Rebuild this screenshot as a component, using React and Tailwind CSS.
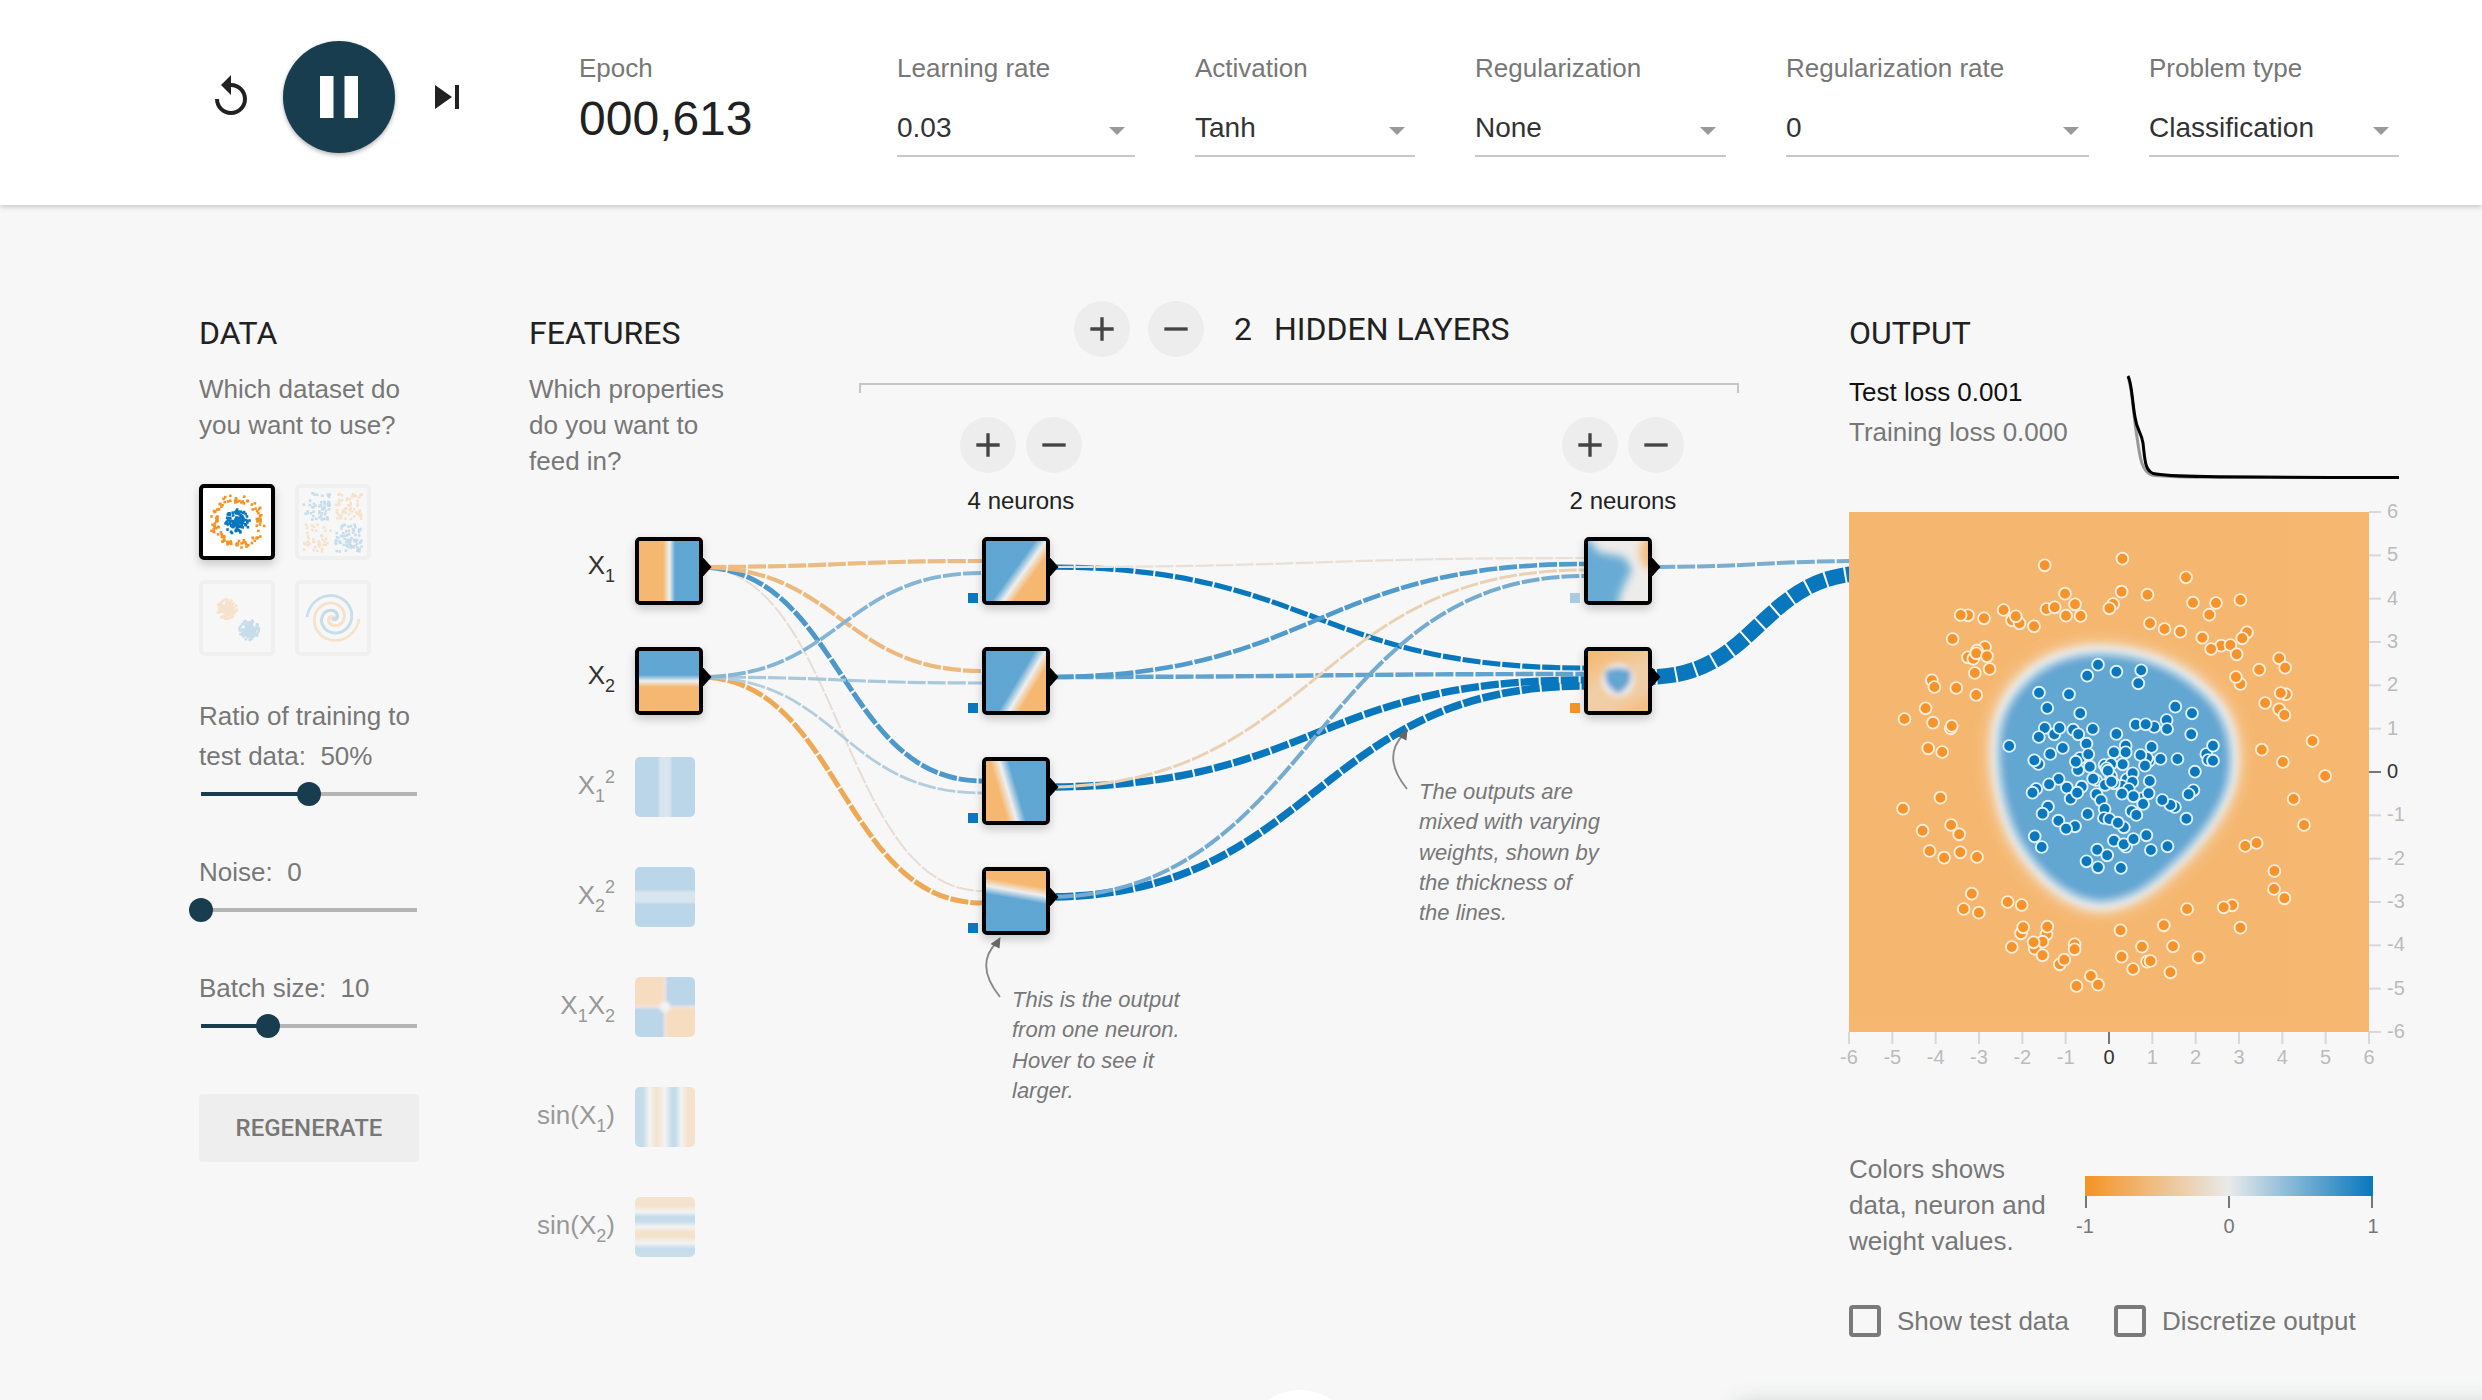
import { useState } from "react";

const ORANGE = "#f59322";
const LIGHT = "#e8eaeb";
const BLUE = "#0877bd";

const HYPERPARAMS = [
  { label: "Learning rate", value: "0.03", width: "w-[238px]" },
  { label: "Activation", value: "Tanh", width: "w-[220px]" },
  { label: "Regularization", value: "None", width: "w-[251px]" },
  { label: "Regularization rate", value: "0", width: "w-[303px]" },
  { label: "Problem type", value: "Classification", width: "w-[250px]" },
];

// Samples of the circle dataset, in heatmap pixels (520 x 520)
const OUTER_POINTS = [
  [195.7, 53.3], [273.4, 46.7], [337, 65.3], [216, 81.7], [272.6, 79.7], [298.5, 82.7],
  [344, 90.7], [367, 91], [391.4, 88], [154.6, 98], [197.5, 97], [205.7, 95.3],
  [226, 92.3], [264.1, 92], [260.4, 96.3], [360.3, 102.7], [119, 103.3], [111.7, 103],
  [135, 106.3], [163, 108.3], [170.5, 111.3], [166.8, 104.3], [185, 114.3], [217, 103.7],
  [231.6, 104], [301, 111.3], [315.5, 117], [331.4, 119.7], [398, 120.3], [353.3, 125.7],
  [393.2, 126.3], [103.6, 127], [136, 135], [128, 138.7], [119, 145.3], [124.3, 146.7],
  [127.3, 141.3], [138, 144.3], [372.1, 133.7], [362.1, 137], [381.4, 133], [387.7, 142.3],
  [430.2, 146.3], [140.6, 157], [125.8, 161], [410.2, 157.7], [436.1, 155.7], [82.9, 168.3],
  [85.4, 175], [107.3, 176], [391.4, 172], [386.9, 165], [436.9, 182.3], [431.7, 181],
  [127.2, 183], [76.6, 196.3], [416.1, 191], [430.2, 197.3], [435.4, 203], [55.5, 207],
  [84, 210.7], [101.7, 216.3], [102.8, 214], [79.2, 236.3], [93.2, 240], [412.8, 237.7],
  [463.5, 229], [433.9, 250], [476.1, 264], [91.4, 285.7], [54, 296.7], [102.1, 313],
  [73.6, 318.7], [110.2, 322.3], [80.6, 339], [95.1, 345.7], [111.3, 340.3], [128, 345],
  [444.6, 287], [455, 313], [407.6, 331], [396.2, 334], [425.4, 359], [425, 377],
  [435.4, 386.3], [122.8, 381.7], [114.7, 397], [129.8, 400.7], [158.7, 390], [172.7, 393],
  [338.1, 397], [383.2, 393.3], [374.7, 395.3], [391.4, 415.7], [314.8, 413.3], [271.5, 418.3],
  [172, 421.3], [174.2, 415.3], [197.5, 422.3], [198.3, 414.7], [193.5, 429.7], [185.7, 436.7],
  [184.6, 430.3], [162.8, 435], [193.5, 443.3], [225.6, 432.3], [225.6, 437.3], [210.8, 452.3],
  [215.3, 447.7], [293, 434.7], [324, 434.3], [349.6, 445.3], [272.6, 444.7], [298.1, 449.7],
  [301.5, 449], [284.1, 457], [321.4, 460.3], [241.9, 464], [227.5, 474], [249, 472.7],
];

const INNER_POINTS = [
  [249, 152.7], [238.2, 163.7], [267.4, 159.7], [292.2, 158.3], [289.3, 171.3], [190, 180.7],
  [220, 182.3], [198.3, 196], [231.2, 201.3], [326.3, 194.7], [343, 201.3], [195.7, 216],
  [205.3, 222.3], [210.5, 216], [224.2, 217.7], [229.3, 222.3], [243.8, 217], [189.8, 225],
  [160.2, 234], [267.4, 222], [286.7, 212.7], [305.2, 215], [296.7, 212.3], [317.7, 208],
  [318.1, 217], [342.2, 222.3], [357.3, 242], [359.2, 248], [364, 233.7], [364, 248.7],
  [237.5, 231.7], [213.8, 236], [201.2, 242], [276.7, 233.7], [302.6, 235], [264.9, 240.3],
  [276.7, 240.3], [229, 258], [231, 246], [239.3, 242.3], [226.8, 249.7], [189.4, 252],
  [185.3, 248.3], [300, 249], [298, 246], [291.5, 243], [311.5, 247], [328.5, 247],
  [240.8, 254.7], [273.7, 252.3], [296, 253.7], [255.6, 253], [262, 252], [257.5, 256.3],
  [262, 264], [258.9, 258.7], [345.9, 259.7], [209.7, 267], [247, 268], [244.1, 266.7],
  [200.1, 272.3], [277.8, 267.3], [283.7, 261.3], [273, 274], [283.4, 270], [300.7, 269],
  [256, 273], [264.9, 271.3], [262.3, 269.7], [187.2, 277], [183.5, 280.7], [217.9, 275.7],
  [232.7, 274.7], [344.4, 278.3], [339.6, 282.3], [221.6, 286.7], [228.2, 280.7], [247.5, 282.3],
  [251.9, 288.3], [279.7, 277], [273, 281.7], [293.3, 286.3], [284.5, 284.3], [299.6, 281.3],
  [294.1, 292], [325.9, 295], [321.4, 293], [313.3, 288], [199, 294.7], [193.5, 301.7],
  [255.6, 297], [238.6, 302], [254.9, 306], [260.4, 307], [209.4, 308.7], [226, 314.3],
  [217.1, 316.7], [274.8, 315.3], [268.9, 310.7], [282.6, 299.3], [287.4, 303], [337.4, 306.7],
  [185.7, 324.3], [192.7, 335], [264.9, 328.7], [277, 334.7], [274.8, 332.3], [284.5, 327],
  [297.4, 323.3], [301.9, 338], [318.5, 334.3], [248.2, 337.7], [258.2, 343.3], [237.5, 349.3],
  [249, 355.3], [271.9, 356],
];

// Position in pixels inside the network panel; links go from right edge to left edge of nodes
const INPUT_X = 170;
const LAYER1 = { in: 453.5, out: 517.5 };
const LAYER2 = { in: 1055, out: 1119 };
const OUTPUT_X = 1341;

const LINKS = [
  { x0: INPUT_X, y0: 254, x1: LAYER1.in, y1: 248, color: "#ecbb82", width: 4.2 },
  { x0: INPUT_X, y0: 364, x1: LAYER1.in, y1: 260, color: "#84b5d5", width: 3.8 },
  { x0: INPUT_X, y0: 254, x1: LAYER1.in, y1: 358, color: "#ecba7e", width: 4.2 },
  { x0: INPUT_X, y0: 364, x1: LAYER1.in, y1: 370, color: "#a8c8dc", width: 3.2 },
  { x0: INPUT_X, y0: 254, x1: LAYER1.in, y1: 468, color: "#4c98ca", width: 5 },
  { x0: INPUT_X, y0: 364, x1: LAYER1.in, y1: 480, color: "#b2cddd", width: 2.8 },
  { x0: INPUT_X, y0: 254, x1: LAYER1.in, y1: 578, color: "#e8dcd3", width: 2 },
  { x0: INPUT_X, y0: 364, x1: LAYER1.in, y1: 590, color: "#eea955", width: 5 },
  { x0: LAYER1.out, y0: 254, x1: LAYER2.in, y1: 245, color: "#e8e0d8", width: 2.2 },
  { x0: LAYER1.out, y0: 364, x1: LAYER2.in, y1: 251, color: "#509bcb", width: 4.6 },
  { x0: LAYER1.out, y0: 474, x1: LAYER2.in, y1: 257, color: "#ebd1b4", width: 3 },
  { x0: LAYER1.out, y0: 584, x1: LAYER2.in, y1: 263, color: "#74abd0", width: 4 },
  { x0: LAYER1.out, y0: 254, x1: LAYER2.in, y1: 355, color: BLUE, width: 5.2 },
  { x0: LAYER1.out, y0: 364, x1: LAYER2.in, y1: 361, color: "#61a3cf", width: 4.4 },
  { x0: LAYER1.out, y0: 474, x1: LAYER2.in, y1: 367, color: BLUE, width: 7.4 },
  { x0: LAYER1.out, y0: 584, x1: LAYER2.in, y1: 373, color: BLUE, width: 7.6 },
  { x0: LAYER2.out, y0: 254, x1: OUTPUT_X, y1: 248, color: "#7aadd0", width: 4 },
  { x0: LAYER2.out, y0: 364, x1: OUTPUT_X, y1: 260, color: BLUE, width: 15.6 },
];

// Small seeded generator so that the thumbnails stay the same between renders
function seeded(seed) {
  let s = seed;
  return () => {
    s = (s * 16807) % 2147483647;
    return s / 2147483647;
  };
}

function circleDots() {
  const rand = seeded(42);
  const dots = [];
  for (let i = 0; i < 110; i++) {
    const a = rand() * Math.PI * 2;
    const r = 19 + rand() * 8.5;
    dots.push([34 + r * Math.cos(a), 34 + r * Math.sin(a), ORANGE]);
  }
  for (let i = 0; i < 120; i++) {
    const a = rand() * Math.PI * 2;
    const r = rand() * 13;
    dots.push([34 + r * Math.cos(a), 34 + r * Math.sin(a), BLUE]);
  }
  return dots;
}

function xorDots() {
  const rand = seeded(7);
  const dots = [];
  for (let i = 0; i < 230; i++) {
    const x = (rand() < 0.5 ? -1 : 1) * (2.5 + rand() * 27);
    const y = (rand() < 0.5 ? -1 : 1) * (2.5 + rand() * 27);
    dots.push([34 + x, 34 + y, x * y > 0 ? BLUE : ORANGE]);
  }
  return dots;
}

function gaussDots() {
  const rand = seeded(99);
  const dots = [];
  for (let i = 0; i < 140; i++) {
    const a = rand() * Math.PI * 2;
    const r = rand() * 10;
    dots.push([24 + r * Math.cos(a), 25 + r * Math.sin(a), ORANGE]);
    dots.push([46 + r * Math.sin(a), 46 + r * Math.cos(a), BLUE]);
  }
  return dots;
}

function spiralDots() {
  const dots = [];
  for (let i = 0; i < 130; i++) {
    const r = (i / 130) * 26;
    const t = (1.75 * i * 2 * Math.PI) / 130;
    dots.push([34 + r * Math.sin(t), 34 + r * Math.cos(t), BLUE]);
    dots.push([34 - r * Math.sin(t), 34 - r * Math.cos(t), ORANGE]);
  }
  return dots;
}

const DATASETS = [
  { id: "circle", dots: circleDots() },
  { id: "xor", dots: xorDots() },
  { id: "gauss", dots: gaussDots() },
  { id: "spiral", dots: spiralDots() },
];

function DatasetThumb({ dots, selected, onClick }) {
  return (
    <button
      onClick={onClick}
      className={`h-[76px] w-[76px] rounded-[5px] border-4 ${
        selected
          ? "border-black bg-white shadow-[0_4px_10px_rgba(0,0,0,0.2)]"
          : "border-[#d9d9d9] opacity-20"
      }`}
    >
      <svg viewBox="0 0 68 68" className="h-[68px] w-[68px]">
        {dots.map(([x, y, color], i) => (
          <rect key={i} x={x - 1.3} y={y - 1.3} width="2.6" height="2.6" fill={color} />
        ))}
      </svg>
    </button>
  );
}

function Slider({ percent }) {
  return (
    <div className="mt-1.5 flex h-6 items-center px-[2px]">
      <div className="relative h-1 w-full bg-[#b5b5b5]">
        <div className="h-1 bg-[#183d4e]" style={{ width: `${percent}%` }} />
        <div
          className="absolute -top-[10px] -ml-3 h-6 w-6 rounded-full bg-[#183d4e]"
          style={{ left: `${percent}%` }}
        />
      </div>
    </div>
  );
}

function Select({ label, value, width }) {
  return (
    <div className={width}>
      <div className="text-[26px] leading-[30px] text-[#777]">{label}</div>
      <div className="mt-[27px] flex h-[47px] items-start justify-between border-b-2 border-[#c8c8c8] pr-[10px]">
        <span className="text-[28px] leading-[36px] text-[#333]">{value}</span>
        <svg viewBox="0 0 16 8" className="mt-[17px] h-2 w-4">
          <path d="M0 0h16l-8 8z" fill="#999" />
        </svg>
      </div>
    </div>
  );
}

function RoundButton({ minus }) {
  return (
    <button className="flex h-14 w-14 items-center justify-center rounded-full bg-[#ededed]">
      <svg viewBox="0 0 24 24" className="h-10 w-10" fill="#444">
        <path d={minus ? "M19 13H5v-2h14v2z" : "M19 13h-6v6h-2v-6H5v-2h6V5h2v6h6v2z"} />
      </svg>
    </button>
  );
}

/* Heatmap of a neuron whose decision boundary is a straight line through (px, py) */
function LinearMap({ id, px, py, nx, ny, half }) {
  return (
    <>
      <defs>
        <linearGradient
          id={id}
          gradientUnits="userSpaceOnUse"
          x1={px - nx * half}
          y1={py - ny * half}
          x2={px + nx * half}
          y2={py + ny * half}
        >
          <stop offset="0" stopColor={ORANGE} />
          <stop offset="0.5" stopColor={LIGHT} />
          <stop offset="1" stopColor={BLUE} />
        </linearGradient>
      </defs>
      <rect width="60" height="60" fill={`url(#${id})`} />
    </>
  );
}

/* Heatmap made of vertical or horizontal bands */
function BandMap({ id, vertical, stops }) {
  return (
    <>
      <defs>
        <linearGradient id={id} x1="0" y1="0" x2={vertical ? 0 : 1} y2={vertical ? 1 : 0}>
          {stops.map(([offset, color], i) => (
            <stop key={i} offset={offset} stopColor={color} />
          ))}
        </linearGradient>
      </defs>
      <rect width="60" height="60" fill={`url(#${id})`} />
    </>
  );
}

function ProductMap() {
  return (
    <>
      <defs>
        <filter id="soft2" x="-20%" y="-20%" width="140%" height="140%">
          <feGaussianBlur stdDeviation="1.4" />
        </filter>
      </defs>
      <rect width="60" height="60" fill={LIGHT} />
      <g filter="url(#soft2)">
        <path d="M-8-8h37.5v37.5H-8z M30.5 30.5H68V68H30.5z" fill={ORANGE} />
        <path d="M30.5-8H68v37.5H30.5z M-8 30.5h37.5V68H-8z" fill={BLUE} />
        <circle cx="30" cy="30" r="5" fill={LIGHT} />
      </g>
    </>
  );
}

function WedgeMap() {
  return (
    <>
      <defs>
        <filter id="soft5" x="-50%" y="-50%" width="200%" height="200%">
          <feGaussianBlur stdDeviation="4" />
        </filter>
      </defs>
      <rect width="60" height="60" fill="#e9e7e3" />
      <g filter="url(#soft5)">
        <path d="M-12 -12 L-2 -6 L10 11 L36 16 L44 28 L38 40 L32 54 L28 74 H-12z" fill="#1980c1" />
        <path d="M56 -4 L72 -4 V32 L56 26 L51 12z" fill="#f39c38" />
      </g>
    </>
  );
}

function RingMap() {
  return (
    <>
      <defs>
        <filter id="soft3" x="-50%" y="-50%" width="200%" height="200%">
          <feGaussianBlur stdDeviation="2.4" />
        </filter>
        <linearGradient id="ringBase" x1="0.2" y1="0" x2="0.7" y2="1">
          <stop offset="0" stopColor="#f59729" />
          <stop offset="0.5" stopColor="#efb877" />
          <stop offset="0.8" stopColor="#efb677" />
          <stop offset="1" stopColor="#f3a345" />
        </linearGradient>
      </defs>
      <rect width="60" height="60" fill="url(#ringBase)" />
      <g filter="url(#soft3)">
        <circle cx="30" cy="29" r="16.5" fill={LIGHT} />
        <path d="M18 19 Q30 14 42 19 Q47 34 30 43 Q13 34 18 19z" fill="#0877bd" />
      </g>
    </>
  );
}

function NodeCanvas({ active, bias, children }) {
  return (
    <div
      className={
        active
          ? "relative h-[68px] w-[68px] rounded-[5px] border-4 border-black bg-[#f7f7f7] shadow-[0_4px_10px_rgba(0,0,0,0.2)]"
          : "h-[60px] w-[60px] overflow-hidden rounded-[5px] opacity-40"
      }
    >
      <svg viewBox="0 0 60 60" className="h-[60px] w-[60px]">
        <g opacity="0.63">{children}</g>
      </svg>
      {bias && (
        <span
          className="absolute top-[52px] -left-[18px] h-[10px] w-[10px]"
          style={{ backgroundColor: bias }}
        />
      )}
      {active && (
        <svg viewBox="0 0 10 18" className="absolute top-[17px] -right-[13px] h-[18px] w-[10px]">
          <path d="M0 0h1.5l8 9-8 9H0z" fill="#000" />
        </svg>
      )}
    </div>
  );
}

function Sub({ children }) {
  return <span className="relative top-2 text-[18px] leading-none">{children}</span>;
}

function Sup({ children }) {
  return <span className="relative -top-[11px] text-[18px] leading-none">{children}</span>;
}

const FEATURES = [
  {
    label: <>X<Sub>1</Sub></>,
    active: true,
    map: <BandMap id="fx1" stops={[[0.4, ORANGE], [0.51, LIGHT], [0.6, BLUE]]} />,
  },
  {
    label: <>X<Sub>2</Sub></>,
    active: true,
    map: <BandMap id="fx2" vertical stops={[[0.4, BLUE], [0.5, LIGHT], [0.6, ORANGE]]} />,
  },
  {
    label: <>X<Sub>1</Sub><Sup>2</Sup></>,
    map: <BandMap id="fx1s" stops={[[0.37, BLUE], [0.43, "#7fb4d6"], [0.57, "#7fb4d6"], [0.63, BLUE]]} />,
  },
  {
    label: <>X<Sub>2</Sub><Sup>2</Sup></>,
    map: <BandMap id="fx2s" vertical stops={[[0.37, BLUE], [0.43, "#7fb4d6"], [0.57, "#7fb4d6"], [0.63, BLUE]]} />,
  },
  { label: <>X<Sub>1</Sub>X<Sub>2</Sub></>, map: <ProductMap /> },
  {
    label: <>sin(X<Sub>1</Sub>)</>,
    map: (
      <BandMap
        id="fsin1"
        stops={[[0, "#2f8cc6"], [0.13, "#2f8cc6"], [0.24, LIGHT], [0.36, "#f1a64e"], [0.5, LIGHT], [0.62, "#2f8cc6"], [0.67, "#2f8cc6"], [0.77, LIGHT], [0.88, "#f1a64e"], [1, "#f1a64e"]]}
      />
    ),
  },
  {
    label: <>sin(X<Sub>2</Sub>)</>,
    map: (
      <BandMap
        id="fsin2"
        vertical
        stops={[[0, "#f1a64e"], [0.14, "#f1a64e"], [0.25, LIGHT], [0.33, "#2f8cc6"], [0.4, "#2f8cc6"], [0.5, LIGHT], [0.58, "#f1a64e"], [0.66, "#f1a64e"], [0.77, LIGHT], [0.86, "#2f8cc6"], [1, "#4d9bcb"]]}
      />
    ),
  },
];

const LAYERS = [
  {
    offset: "ml-[101px]",
    nodes: [
      { bias: BLUE, map: <LinearMap id="n1" px={37} py={32} nx={-0.81} ny={-0.585} half={9} /> },
      { bias: BLUE, map: <LinearMap id="n2" px={40} py={32} nx={-0.86} ny={-0.52} half={9} /> },
      { bias: BLUE, map: <LinearMap id="n3" px={22} py={30} nx={0.96} ny={-0.28} half={9} /> },
      { bias: BLUE, map: <LinearMap id="n4" px={30} py={20} nx={-0.17} ny={0.98} half={8} /> },
    ],
  },
  {
    offset: "ml-[480px]",
    nodes: [
      { bias: "#a9cae0", map: <WedgeMap /> },
      { bias: "#f39326", map: <RingMap /> },
    ],
  },
];

function Links() {
  return (
    <svg
      viewBox="0 0 1320 900"
      className="pointer-events-none absolute top-0 left-0 h-[900px] w-[1320px]"
      fill="none"
    >
      {[...LINKS].reverse().map((l, i) => {
        const mid = (l.x0 + l.x1) / 2;
        return (
          <path
            key={i}
            d={`M${l.x0},${l.y0}C${mid},${l.y0} ${mid},${l.y1} ${l.x1},${l.y1}`}
            stroke={l.color}
            strokeWidth={l.width}
            strokeDasharray="18 2"
            strokeDashoffset="11"
          />
        );
      })}
    </svg>
  );
}

function CalloutArrow() {
  return (
    <svg viewBox="0 0 24 66" className="h-[66px] w-6 shrink-0" fill="none">
      <path d="M18 62 Q-8 30 15 7" stroke="#888" strokeWidth="1.8" />
      <path d="M18.5 2 L8.5 9 L17.5 13.5z" fill="#666" />
    </svg>
  );
}

function Blob() {
  const d =
    "M250,134 C302,134 347,158 372,190 C388,212 393,242 386,272 C378,303 350,338 324,361 C300,385 275,398 250,398 C215,396 180,362 162,328 C146,296 140,255 143,222 C147,180 185,134 250,134Z";
  return (
    <>
      <defs>
        <filter id="haze" x="-20%" y="-20%" width="140%" height="140%">
          <feGaussianBlur stdDeviation="9" />
        </filter>
        <filter id="edge" x="-20%" y="-20%" width="140%" height="140%">
          <feGaussianBlur stdDeviation="4.5" />
        </filter>
      </defs>
      <rect width="520" height="520" fill={ORANGE} />
      <path d={d} fill={LIGHT} opacity="0.8" filter="url(#haze)" />
      <path d={d} fill={LIGHT} filter="url(#edge)" />
      <path
        d={d}
        fill={BLUE}
        filter="url(#edge)"
        transform="translate(265 266) scale(0.935) translate(-265 -266)"
      />
    </>
  );
}

function OutputChart() {
  const ticks = [-6, -5, -4, -3, -2, -1, 0, 1, 2, 3, 4, 5, 6];
  const pos = (v) => ((v + 6) / 12) * 520;
  return (
    <svg viewBox="0 0 560 560" className="mt-[60px] h-[560px] w-[560px] overflow-visible">
      <g opacity="0.63">
        <Blob />
      </g>
      {OUTER_POINTS.map(([x, y], i) => (
        <circle key={i} cx={x} cy={y} r="5.9" fill="#f6932a" stroke="#ffeedb" strokeWidth="1.9" />
      ))}
      {INNER_POINTS.map(([x, y], i) => (
        <circle key={i} cx={x} cy={y} r="5.9" fill="#0b77bc" stroke="#e0f2ff" strokeWidth="1.9" />
      ))}
      {ticks.map((t) => (
        <g key={t} stroke={t === 0 ? "#777" : "#d8d8d8"} strokeWidth="2">
          <line x1={pos(t)} x2={pos(t)} y1="520" y2="532" />
          <line x1="520" x2="532" y1={pos(-t)} y2={pos(-t)} />
        </g>
      ))}
      {ticks.map((t) => (
        <g key={t} fontSize="20" fill={t === 0 ? "#333" : "#bbb"}>
          <text x={pos(t)} y="551.5" textAnchor="middle">{t}</text>
          <text x="538" y={pos(-t) + 6}>{t}</text>
        </g>
      ))}
    </svg>
  );
}

function LossChart() {
  return (
    <svg viewBox="0 0 274 104" className="h-[104px] w-[274px]" fill="none" strokeWidth="3">
      <path d="M2 2 C7 16 7 40 11 62 C14 84 16 97 26 100 C40 102.5 80 102.5 273 103" stroke="#999" />
      <path d="M2 1 C6 8 6 26 9 42 C11 56 15 56 17 68 C19 86 19 95 27 98.5 C42 102 80 102 273 102.5" stroke="#000" />
    </svg>
  );
}

function Checkbox({ label }) {
  return (
    <label className="flex items-center gap-4">
      <span className="h-8 w-8 rounded-[4px] border-4 border-[#7a7a7a]" />
      <span className="text-[26px] leading-[32px] text-[#777]">{label}</span>
    </label>
  );
}

function Header() {
  return (
    <header className="relative flex h-[205px] bg-white pl-[207px] shadow-[0_1px_6px_rgba(0,0,0,0.25)]">
      <div className="flex h-[194px] items-center gap-7">
        <svg viewBox="0 0 24 24" className="h-12 w-12" fill="#212121">
          <path d="M12 5V1L7 6l5 5V7c3.31 0 6 2.69 6 6s-2.69 6-6 6-6-2.69-6-6H4c0 4.42 3.58 8 8 8s8-3.58 8-8-3.58-8-8-8z" />
        </svg>
        <button className="flex h-28 w-28 items-center justify-center rounded-full bg-[#183d4e] shadow-[0_2px_4px_rgba(0,0,0,0.3)]">
          <svg viewBox="0 0 38 42" className="h-[42px] w-[38px]" fill="#fff">
            <path d="M0 0h13.5v42H0zM24.5 0H38v42H24.5z" />
          </svg>
        </button>
        <svg viewBox="0 0 24 24" className="h-12 w-12" fill="#212121">
          <path d="M6 18l8.5-6L6 6v12zM16 6v12h2V6h-2z" />
        </svg>
      </div>
      <div className="mt-[53px] ml-[108px] w-[318px]">
        <div className="text-[26px] leading-[30px] text-[#777]">Epoch</div>
        <div className="mt-2.5 text-[48px] leading-[52px] text-[#212121]">000,613</div>
      </div>
      <div className="mt-[53px] flex gap-[60px]">
        {HYPERPARAMS.map((p) => (
          <Select key={p.label} {...p} />
        ))}
      </div>
    </header>
  );
}

export default function App() {
  const [dataset, setDataset] = useState("circle");

  return (
    <div className="relative h-[1400px] w-[2482px] overflow-hidden bg-[#f7f7f7] font-['Liberation_Sans',Arial,sans-serif]">
      <Header />

      <main className="flex pt-[108px] pl-[199px]">
        {/* Data */}
        <section className="w-[220px] text-[26px] text-[#777]">
          <h2 className="font-[Roboto] text-[32px] leading-10 text-[#212121]">DATA</h2>
          <p className="mt-[18px] leading-9">Which dataset do you want to use?</p>
          <div className="mt-[41px] grid w-[172px] grid-cols-2 gap-5">
            {DATASETS.map((d) => (
              <DatasetThumb
                key={d.id}
                dots={d.dots}
                selected={d.id === dataset}
                onClick={() => setDataset(d.id)}
              />
            ))}
          </div>
          <div className="mt-10 leading-10 whitespace-nowrap">
            Ratio of training to
            <br />
            test data:&nbsp; 50%
          </div>
          <Slider percent={50} />
          <div className="mt-[46px] leading-10">Noise:&nbsp; 0</div>
          <Slider percent={0} />
          <div className="mt-[46px] leading-10">Batch size:&nbsp; 10</div>
          <Slider percent={31} />
          <button className="mt-14 h-[68px] w-full rounded-[4px] bg-[#eeeeee] font-[Roboto] text-[24px] font-medium text-[#777]">
            REGENERATE
          </button>
        </section>

        {/* Network */}
        <div className="relative ml-[110px] flex w-[1320px]">
          <Links />

          <section className="relative w-[174px] text-[26px]">
            <h2 className="font-[Roboto] text-[32px] leading-10 text-[#212121]">FEATURES</h2>
            <p className="mt-[18px] w-[220px] leading-9 text-[#777]">
              Which properties
              <br />
              do you want to
              <br />
              feed in?
            </p>
            <div className="mt-[58px]">
              {FEATURES.map((f, i) => (
                <div key={i} className="flex h-[110px] items-start">
                  <span
                    className={`mr-5 w-[86px] text-right leading-[57px] ${
                      f.active ? "text-[#333]" : "text-[#999]"
                    }`}
                  >
                    {f.label}
                  </span>
                  <NodeCanvas active={f.active}>{f.map}</NodeCanvas>
                </div>
              ))}
            </div>
          </section>

          <section className="relative -mt-3 ml-[156px] w-[880px]">
            <div className="flex h-14 items-center pl-[215px] font-[Roboto] text-[32px] text-[#212121]">
              <RoundButton />
              <span className="w-[18px]" />
              <RoundButton minus />
              <span className="ml-[30px]">2</span>
              <h2 className="ml-[22px]">HIDDEN LAYERS</h2>
            </div>
            <div className="mt-[26px] h-[10px] border-2 border-b-0 border-[#c6c6c6]" />
            <div className="mt-6 flex items-start">
              {LAYERS.map((layer, i) => (
                <div key={i} className={`w-[122px] ${layer.offset}`}>
                  <div className="flex justify-between">
                    <RoundButton />
                    <RoundButton minus />
                  </div>
                  <div className="mt-[14px] text-center text-[24px] leading-7 text-[#222]">
                    {layer.nodes.length} neurons
                  </div>
                  <div className="mt-[22px] ml-[22px] flex flex-col gap-[42px]">
                    {layer.nodes.map((n, j) => (
                      <NodeCanvas key={j} active bias={n.bias}>
                        {n.map}
                      </NodeCanvas>
                    ))}
                  </div>
                </div>
              ))}
            </div>
          </section>

          {/* Callouts over the diagram */}
          <div className="absolute top-[622px] left-[453px] flex">
            <CalloutArrow />
            <p className="mt-[50px] ml-[6px] text-[22px] leading-[30.3px] whitespace-nowrap text-[#777] italic">
              This is the output
              <br />
              from one neuron.
              <br />
              Hover to see it
              <br />
              larger.
            </p>
          </div>
          <div className="absolute top-[414px] left-[860px] flex">
            <CalloutArrow />
            <p className="mt-[50px] ml-[6px] text-[22px] leading-[30.3px] whitespace-nowrap text-[#777] italic">
              The outputs are
              <br />
              mixed with varying
              <br />
              weights, shown by
              <br />
              the thickness of
              <br />
              the lines.
            </p>
          </div>
        </div>

        {/* Output */}
        <section className="relative w-[560px] text-[26px] text-[#777]">
          <div className="flex h-[139px] justify-between pr-[9px]">
            <div>
              <h2 className="font-[Roboto] text-[32px] leading-10 text-[#212121]">OUTPUT</h2>
              <div className="mt-[19px] leading-10 text-[#111]">Test loss 0.001</div>
              <div className="leading-10">Training loss 0.000</div>
            </div>
            <div className="pt-[62px]">
              <LossChart />
            </div>
          </div>
          <OutputChart />
          <div className="mt-[79px] flex">
            <p className="w-[216px] leading-9 whitespace-nowrap">
              Colors shows
              <br />
              data, neuron and
              <br />
              weight values.
            </p>
            <svg viewBox="0 0 328 66" className="mt-[25px] h-[66px] w-[328px]">
              <defs>
                <linearGradient id="legend">
                  <stop offset="0" stopColor={ORANGE} />
                  <stop offset="0.5" stopColor={LIGHT} />
                  <stop offset="1" stopColor={BLUE} />
                </linearGradient>
              </defs>
              <rect x="20" width="288" height="20" fill="url(#legend)" />
              <path d="M21 20v12M164 20v12M307 20v12" stroke="#777" strokeWidth="2" />
              <g fontSize="20" fill="#777" textAnchor="middle">
                <text x="20" y="57">-1</text>
                <text x="164" y="57">0</text>
                <text x="308" y="57">1</text>
              </g>
            </svg>
          </div>
          <div className="mt-[46px] flex gap-[45px]">
            <Checkbox label="Show test data" />
            <Checkbox label="Discretize output" />
          </div>
        </section>
      </main>

      {/* Scroll hint and the edge of the article below */}
      <div className="absolute top-[1390px] left-[1244px] h-28 w-28 rounded-full bg-white" />
      <div className="absolute top-[1404px] left-[1735px] h-10 w-[775px] shadow-[0_0_22px_rgba(40,70,60,0.22)]" />
    </div>
  );
}
